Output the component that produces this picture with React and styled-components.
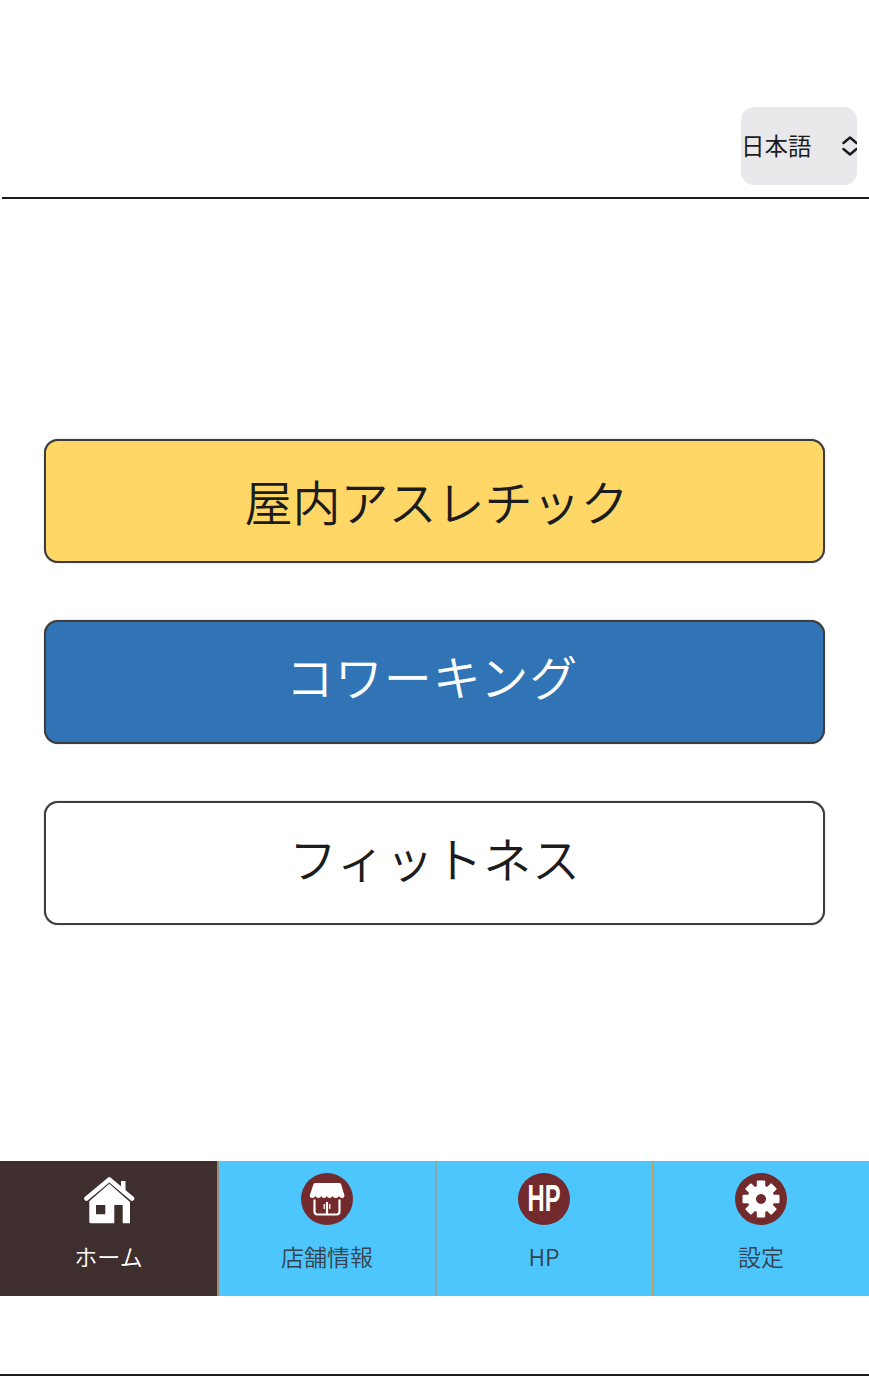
import React from "react";
import styled, { createGlobalStyle } from "styled-components";

const Global = createGlobalStyle`
  html, body { margin: 0; padding: 0; background: #fff; }
  #root { width: 869px; height: 1376px; }
  * { box-sizing: border-box; }
`;
const FONT = `"Noto Sans CJK JP", "Noto Sans", sans-serif`;

const Page = styled.div`
  width: 869px;
  height: 1376px;
  display: flex;
  flex-direction: column;
  font-family: ${FONT};
  color: #1c1c1e;
  border-bottom: 2px solid #1c1c1e;
`;
const Header = styled.header`
  height: 199px;
  margin-left: 2px;
  padding: 0 12px 12px 0;
  display: flex;
  justify-content: flex-end;
  align-items: flex-end;
  border-bottom: 2px solid #1c1c1e;
`;
const LangSelect = styled.div`
  width: 116px;
  height: 78px;
  padding: 0 0 2px 0;
  border-radius: 13px;
  background: #e9e9eb;
  display: flex;
  align-items: center;
  justify-content: space-between;
  font-size: 23.5px;
  line-height: 76px;
`;
const Chevrons = styled.svg`
  width: 16px;
  height: 24px;
  margin-top: 2px;
  display: block;
  flex: none;
`;
const Main = styled.main`
  height: 962px;
  padding: 240px 44px 0;
  display: flex;
  flex-direction: column;
  gap: 57px;
`;
const Mode = styled.button`
  width: 781px;
  height: 124px;
  border: 2px solid #3d3d40;
  border-radius: 14px;
  box-shadow: 0 0 1px rgba(61, 61, 64, 0.8);
  background: ${(p) => p.$bg};
  color: ${(p) => p.$fg};
  font-family: ${FONT};
  font-size: 48px;
  font-weight: 350;
  line-height: 1;
  letter-spacing: ${(p) => p.$track}px;
  padding: 0 ${(p) => p.$right}px ${(p) => p.$lift}px ${(p) => p.$left}px;
`;
const TabBar = styled.nav`
  height: 135px;
  display: grid;
  grid-template-columns: 219px 218px 217px 215px;
`;
const Tab = styled.div`
  background: ${(p) => (p.$active ? "#3e2e2e" : "#4dc6fe")};
  color: ${(p) => (p.$active ? "#fff" : "#36434f")};
  border-right: ${(p) => (p.$line ? `2px solid ${p.$line}` : "0")};
  padding: 12px ${(p) => (p.$tight ? 1 : 0)}px 0 0;
  display: flex;
  flex-direction: column;
  align-items: center;
  gap: 14px;
`;
const Badge = styled.div`
  width: 52px;
  height: 52px;
  border-radius: 50%;
  background: #722a2c;
  color: #fff;
  display: flex;
  align-items: center;
  justify-content: center;
  overflow: hidden;
`;
const HpMark = styled.span`
  font-family: "Liberation Sans", sans-serif;
  font-weight: 700;
  font-size: 36px;
  line-height: 1;
  display: block;
  transform: scaleX(0.66);
  letter-spacing: 0;
`;
const PlainIcon = styled.svg`
  width: 52px;
  height: 52px;
  display: block;
  flex: none;
`;
const Label = styled.span`
  font-size: 23px;
  line-height: 34px;
  font-weight: 350;
`;

const HomeIcon = () => (
  <PlainIcon viewBox="0 0 52 52">
    <path d="M3.500 25.500 L26.300 6.500 L49 25.500" fill="none" stroke="#fff" strokeWidth="4.600" strokeLinecap="round" strokeLinejoin="round" />
    <rect x="38" y="8" width="4.500" height="10" fill="#fff" />
    <path
      fillRule="evenodd"
      fill="#fff"
      d="M6.300 28.200 L26.300 10.800 L47 29 V50.300 H39.700 V32 H31.300 V50.300 H7.800 Q6.300 50.300 6.300 48.800 Z M13 32 V41.300 H22.300 V32 Z"
    />
  </PlainIcon>
);

const StoreIcon = () => (
  <PlainIcon viewBox="0 0 52 52">
    <path
      fill="#fff"
      d="M14 10 H38 Q39.500 10 40 11 L43.500 22.500 Q43.500 25 41.200 25 Q38.700 25 38 23 Q37 25 34.800 25 Q32.300 25 31.500 23 Q30.700 25 28.500 25 Q26.500 25 25.800 23 Q25 25 23 25 Q21 25 20.300 23 Q19.500 25 17.300 25 Q15.200 25 14.500 23 Q13.500 25 11.300 25 Q8.700 25 8.700 22.500 L12.500 11 Q13 10 14 10 Z"
    />
    <path
      fill="none"
      stroke="#fff"
      strokeWidth="2.200"
      d="M13.500 26.500 V38.500 Q13.500 41.500 16.500 41.500 H35.500 Q38.500 41.500 38.500 38.500 V26.500 M26 29 V41"
    />
    <path fill="none" stroke="#fff" strokeWidth="1.300" d="M23.200 31 V36 M28.800 31 V36" />
  </PlainIcon>
);

const TEETH = [0, 45, 90, 135, 180, 225, 270, 315];

const GearIcon = () => (
  <PlainIcon viewBox="0 0 52 52">
    <g fill="#fff">
      {TEETH.map((a) => (
        <rect key={a} x="21.800" y="7.500" width="8.400" height="10" rx="1" transform={`rotate(${a} 26 26)`} />
      ))}
      <path
        fillRule="evenodd"
        d="M26 12.500 A13.500 13.500 0 1 1 25.990 12.500 Z M26 21 A5 5 0 1 0 26.010 21 Z"
      />
    </g>
  </PlainIcon>
);

export default function App() {
  return (
    <Page>
      <Global />
      <Header>
        <LangSelect>
          日本語
          <Chevrons viewBox="0 0 16 24">
            <path
              d="M2.500 9 L9 3.500 L15.500 9 M2.500 15 L9 20.500 L15.500 15"
              fill="none"
              stroke="#1c1c1e"
              strokeWidth="2.500"
              strokeLinecap="round"
              strokeLinejoin="round"
            />
          </Chevrons>
        </LangSelect>
      </Header>
      <Main>
        <Mode $bg="#fed766" $fg="#1c1c1e" $track={0} $left={4} $right={0} $lift={2}>屋内アスレチック</Mode>
        <Mode $bg="#3074b5" $fg="#fff" $track={1} $left={0} $right={5} $lift={14}>コワーキング</Mode>
        <Mode $bg="#fff" $fg="#1c1c1e" $track={0.8} $left={1} $right={0} $lift={12}>フィットネス</Mode>
      </Main>
      <TabBar>
        <Tab $active $line="#9a8a70">
          <HomeIcon />
          <Label>ホーム</Label>
        </Tab>
        <Tab $line="#8aa8a4">
          <Badge><StoreIcon /></Badge>
          <Label>店舗情報</Label>
        </Tab>
        <Tab $line="#c0a060" $tight>
          <Badge><HpMark>HP</HpMark></Badge>
          <Label>HP</Label>
        </Tab>
        <Tab $tight>
          <Badge><GearIcon /></Badge>
          <Label>設定</Label>
        </Tab>
      </TabBar>
    </Page>
  );
}
